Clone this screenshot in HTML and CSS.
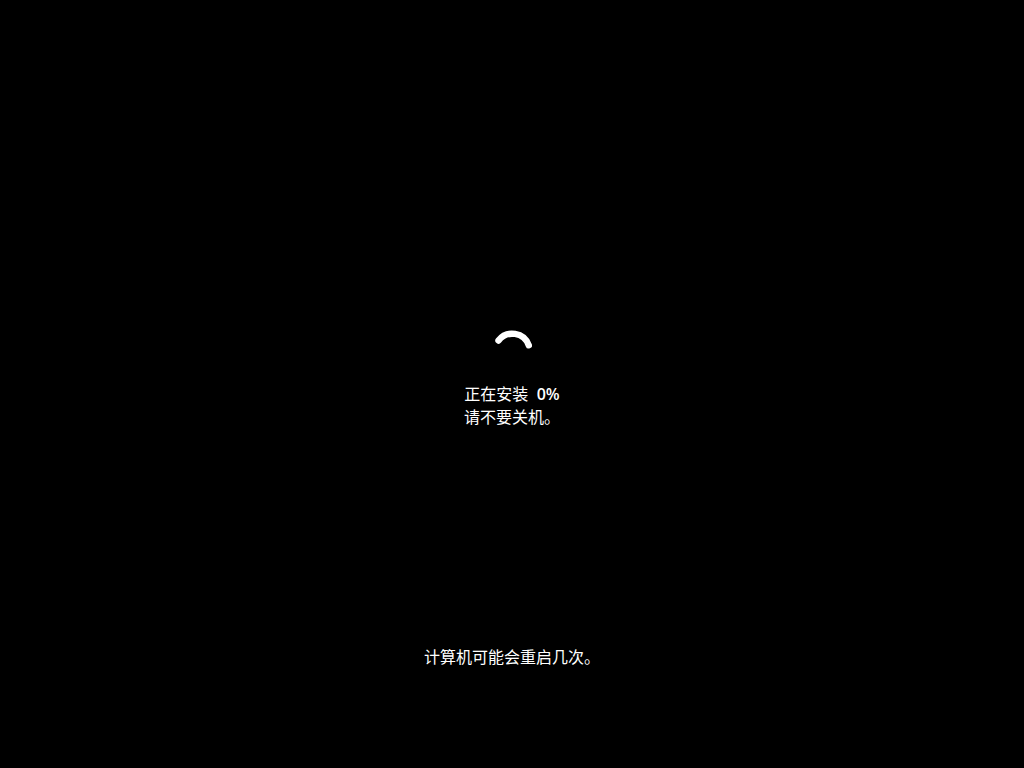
FILE: index.html
```html
<!DOCTYPE html>
<html lang="zh-CN">
<head>
  <meta charset="UTF-8" />
  <title>正在安装</title>
  <link rel="stylesheet" href="styles.css">
</head>
<body>
  <main class="setup">
    <svg class="spinner" viewBox="0 0 40 40" aria-hidden="true">
      <path d="M6.5 11.5 A17.5 17.5 0 0 1 36.8 16.3" />
    </svg>
    <div class="status" role="status">
      <p>正在安装&nbsp; <span class="percent">0%</span></p>
      <p>请不要关机。</p>
    </div>
  </main>
  <footer class="note">计算机可能会重启几次。</footer>
</body>
</html>
```

FILE: styles.css
```css
html, body {
  height: 100%;
  margin: 0;
}

body {
  display: flex;
  flex-direction: column;
  background-color: #000;
  color: #fff;
  font-family: "Open Sans", "Noto Sans CJK SC", sans-serif;
  font-size: 16px;
  line-height: 23px;
  text-align: center;
}

.setup {
  flex: 1;
  display: flex;
  flex-direction: column;
  align-items: center;
  justify-content: center;
  gap: 14px;
  padding-top: 112px;
}

.spinner {
  width: 40px;
  height: 40px;
  fill: none;
  stroke: #fff;
  stroke-width: 6.4;
  stroke-linecap: round;
}

.status p {
  margin: 0;
}

.percent {
  font-weight: 600;
}

.note {
  padding-bottom: 99px;
}
```
